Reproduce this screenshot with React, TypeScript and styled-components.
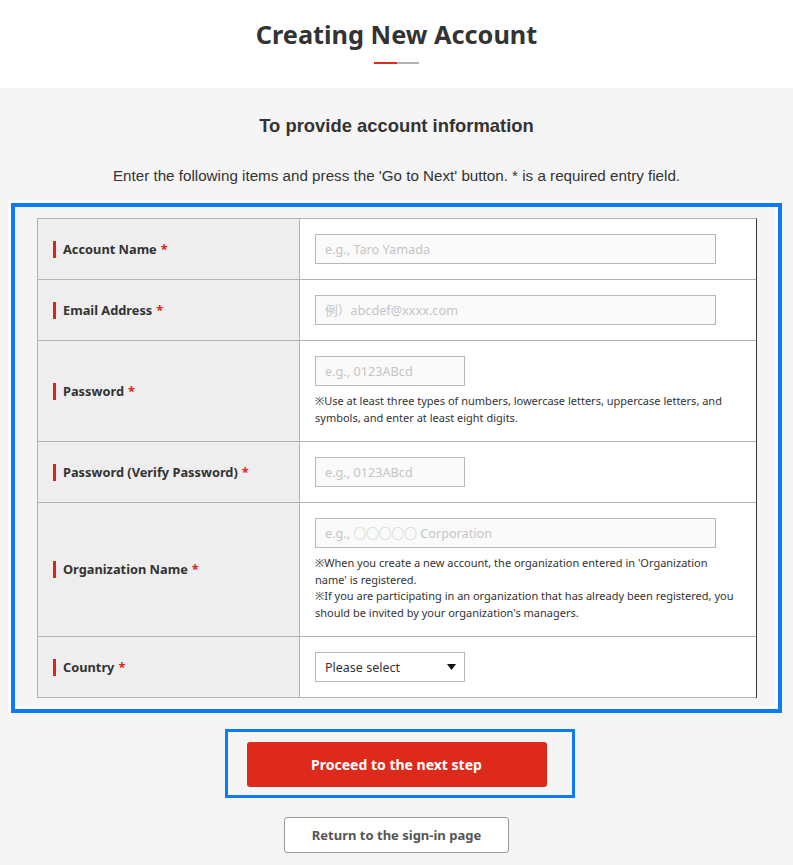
import React from 'react';
import styled, { createGlobalStyle } from 'styled-components';

const Global = createGlobalStyle`
  html, body { margin: 0; padding: 0; background: #f5f5f5; }
  body { font-family: "Noto Sans", "Noto Sans CJK JP", sans-serif; color: #333; }
  *, *::before, *::after { box-sizing: border-box; }
`;

const Header = styled.header`
  background: #fff;
  height: 88px;
  padding-top: 16px;
  text-align: center;
`;

const Title = styled.h1`
  margin: 0;
  font-size: 25.3px;
  line-height: 36px;
  font-weight: 700;
  color: #333;
`;

const Rule = styled.div`
  display: flex;
  justify-content: center;
  margin-top: 10px;
`;

const RuleSeg = styled.span<{ $c: string; $w: number }>`
  display: block;
  height: 2px;
  width: ${p => p.$w}px;
  background: ${p => p.$c};
`;

const Main = styled.main`
  padding-top: 26px;
  padding-bottom: 11px;
`;

const SubHeading = styled.h2`
  margin: 0;
  font-family: "Liberation Sans", Arial, sans-serif;
  font-size: 18.4px;
  line-height: 24px;
  font-weight: 700;
  text-align: center;
  color: #333;
`;

const Lead = styled.p`
  margin: 28px 0 17px;
  font-family: "Liberation Sans", Arial, sans-serif;
  font-size: 15.2px;
  line-height: 20px;
  text-align: center;
  color: #333;
`;

const Frame = styled.section`
  margin-left: 11px;
  width: 771px;
  border: 4px solid #0b7bf6;
  padding: 11px 21px 11px 22px;
  box-shadow: -3px -3px 0 0 #fff, inset -3px -3px 0 0 #fff;
`;

const Table = styled.div`
  border-top: 1px solid #b3b3b3;
  border-left: 1px solid #b3b3b3;
  border-right: 1px solid #3a3a3a;
`;

const Row = styled.div`
  display: grid;
  grid-template-columns: 262px 1fr;
  border-bottom: 1px solid #b3b3b3;
`;

const LabelCell = styled.div`
  background: #eeeeee;
  border-right: 1px solid #b3b3b3;
  display: flex;
  align-items: center;
  padding-left: 15px;
`;

const Label = styled.span`
  border-left: 3px solid #d7261b;
  padding-left: 7px;
  font-size: 12.8px;
  line-height: 17px;
  font-weight: 700;
  color: #333;
`;

const Req = styled.span`
  color: #e0261b;
  margin-left: 4px;
`;

const FieldCell = styled.div`
  background: #fff;
  padding: 15px 15px;
`;

const Input = styled.input<{ $w: number }>`
  display: block;
  width: ${p => p.$w}px;
  height: 30px;
  border: 1px solid #b8b8b8;
  background: #fafafa;
  padding: 0 9px;
  font-family: "Noto Sans", "Noto Sans CJK JP", sans-serif;
  font-size: 12.7px;
  color: #333;
  outline: none;
  &::placeholder { color: #c5c5c5; }
`;

const Note = styled.p`
  margin: 7px 0 0;
  font-size: 11px;
  line-height: 16.5px;
  color: #333;
  white-space: nowrap;
`;

const SelectWrap = styled.div`
  position: relative;
  width: 150px;
`;

const Select = styled.select`
  display: block;
  width: 150px;
  height: 30px;
  appearance: none;
  -webkit-appearance: none;
  border: 1px solid #b8b8b8;
  border-radius: 0;
  background: #fff;
  padding: 0 9px;
  font-family: "Noto Sans", "Noto Sans CJK JP", sans-serif;
  font-size: 12.5px;
  color: #333;
  outline: none;
`;

const Caret = styled.svg`
  position: absolute;
  right: 9px;
  top: 12px;
  pointer-events: none;
`;

const Actions = styled.div`
  display: flex;
  flex-direction: column;
  align-items: center;
  margin-top: 16px;
`;

const Highlight = styled.div`
  border: 3px solid #0b7bf6;
  padding: 10px 25px 8px 19px;
  margin-left: 6px;
`;

const PrimaryButton = styled.button`
  display: block;
  width: 300px;
  height: 45px;
  border: none;
  border-radius: 3px;
  background: #dd2a1b;
  color: #fff;
  font-family: "Noto Sans", sans-serif;
  font-size: 14px;
  font-weight: 700;
  cursor: pointer;
`;

const SecondaryButton = styled.button`
  margin-top: 19px;
  width: 225px;
  height: 36px;
  border: 1px solid #9a9a9a;
  border-radius: 3px;
  background: #fff;
  color: #555;
  font-family: "Noto Sans", sans-serif;
  font-size: 13px;
  font-weight: 700;
  cursor: pointer;
`;

type FieldRowProps = { label: string; children: React.ReactNode };

const FieldRow = ({ label, children }: FieldRowProps) => (
  <Row>
    <LabelCell>
      <Label>
        {label}
        <Req>*</Req>
      </Label>
    </LabelCell>
    <FieldCell>{children}</FieldCell>
  </Row>
);

export default function App() {
  return (
    <>
      <Global />
      <Header>
        <Title>Creating New Account</Title>
        <Rule>
          <RuleSeg $c="#dd2a1b" $w={23} />
          <RuleSeg $c="#b3b3b3" $w={22} />
        </Rule>
      </Header>
      <Main>
        <SubHeading>To provide account information</SubHeading>
        <Lead>Enter the following items and press the 'Go to Next' button. * is a required entry field.</Lead>
        <Frame>
          <Table>
            <FieldRow label="Account Name">
              <Input $w={401} placeholder="e.g., Taro Yamada" />
            </FieldRow>
            <FieldRow label="Email Address">
              <Input $w={401} placeholder="例）abcdef@xxxx.com" />
            </FieldRow>
            <FieldRow label="Password">
              <Input $w={150} type="text" placeholder="e.g., 0123ABcd" />
              <Note>
                ※Use at least three types of numbers, lowercase letters, uppercase letters, and
                <br />
                symbols, and enter at least eight digits.
              </Note>
            </FieldRow>
            <FieldRow label="Password (Verify Password)">
              <Input $w={150} type="text" placeholder="e.g., 0123ABcd" />
            </FieldRow>
            <FieldRow label="Organization Name">
              <Input $w={401} placeholder="e.g., ○○○○○ Corporation" />
              <Note>
                ※When you create a new account, the organization entered in 'Organization
                <br />
                name' is registered.
                <br />
                ※If you are participating in an organization that has already been registered, you
                <br />
                should be invited by your organization's managers.
              </Note>
            </FieldRow>
            <FieldRow label="Country">
              <SelectWrap>
                <Select defaultValue="">
                  <option value="">Please select</option>
                </Select>
                <Caret width="9" height="6" viewBox="0 0 9 6">
                  <polygon points="0,0 9,0 4.5,6" fill="#111" />
                </Caret>
              </SelectWrap>
            </FieldRow>
          </Table>
        </Frame>
        <Actions>
          <Highlight>
            <PrimaryButton>Proceed to the next step</PrimaryButton>
          </Highlight>
          <SecondaryButton>Return to the sign-in page</SecondaryButton>
        </Actions>
      </Main>
    </>
  );
}
